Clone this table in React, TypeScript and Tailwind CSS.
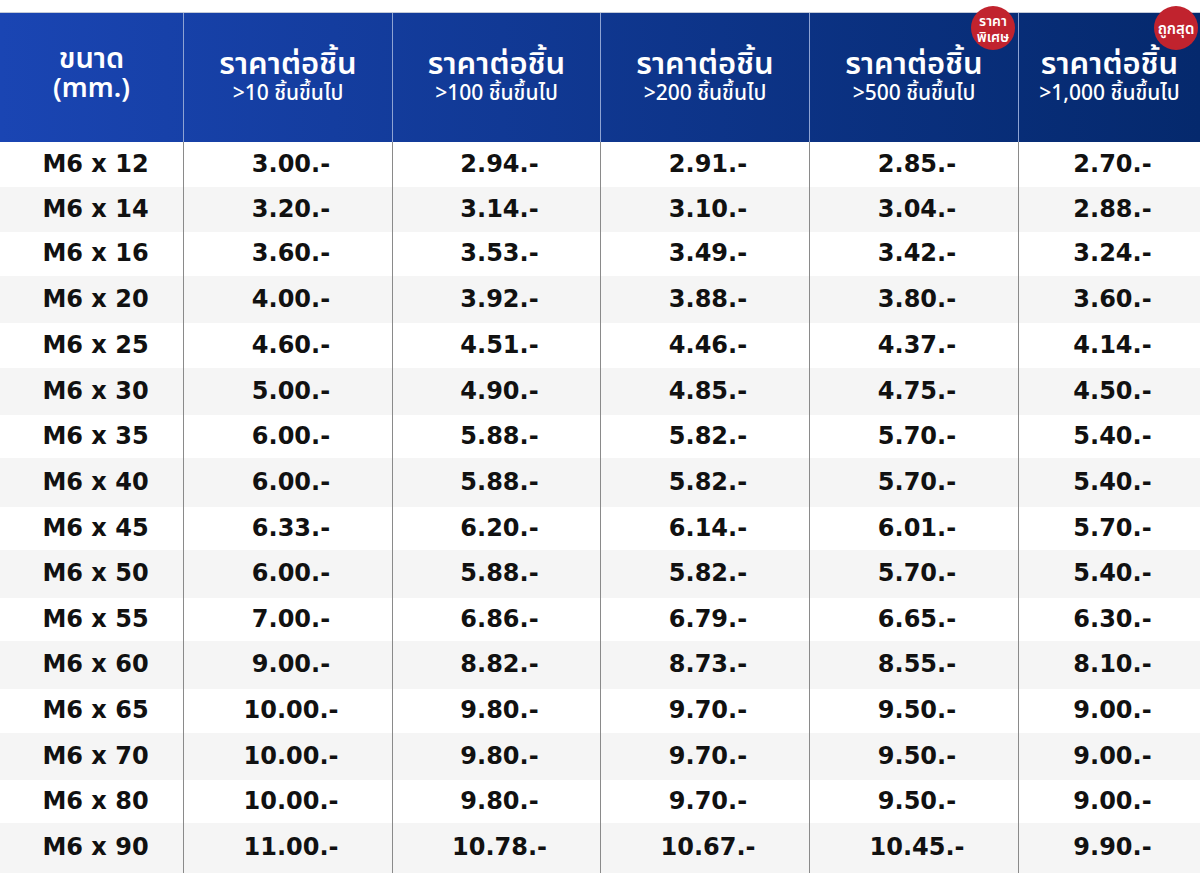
import React from "react";

const rows: [string, string[]][] = [
  ["M6 x 12", ["3.00.-", "2.94.-", "2.91.-", "2.85.-", "2.70.-"]],
  ["M6 x 14", ["3.20.-", "3.14.-", "3.10.-", "3.04.-", "2.88.-"]],
  ["M6 x 16", ["3.60.-", "3.53.-", "3.49.-", "3.42.-", "3.24.-"]],
  ["M6 x 20", ["4.00.-", "3.92.-", "3.88.-", "3.80.-", "3.60.-"]],
  ["M6 x 25", ["4.60.-", "4.51.-", "4.46.-", "4.37.-", "4.14.-"]],
  ["M6 x 30", ["5.00.-", "4.90.-", "4.85.-", "4.75.-", "4.50.-"]],
  ["M6 x 35", ["6.00.-", "5.88.-", "5.82.-", "5.70.-", "5.40.-"]],
  ["M6 x 40", ["6.00.-", "5.88.-", "5.82.-", "5.70.-", "5.40.-"]],
  ["M6 x 45", ["6.33.-", "6.20.-", "6.14.-", "6.01.-", "5.70.-"]],
  ["M6 x 50", ["6.00.-", "5.88.-", "5.82.-", "5.70.-", "5.40.-"]],
  ["M6 x 55", ["7.00.-", "6.86.-", "6.79.-", "6.65.-", "6.30.-"]],
  ["M6 x 60", ["9.00.-", "8.82.-", "8.73.-", "8.55.-", "8.10.-"]],
  ["M6 x 65", ["10.00.-", "9.80.-", "9.70.-", "9.50.-", "9.00.-"]],
  ["M6 x 70", ["10.00.-", "9.80.-", "9.70.-", "9.50.-", "9.00.-"]],
  ["M6 x 80", ["10.00.-", "9.80.-", "9.70.-", "9.50.-", "9.00.-"]],
  ["M6 x 90", ["11.00.-", "10.78.-", "10.67.-", "10.45.-", "9.90.-"]],
];

const heights = [
  "h-[45px]", "h-[45px]", "h-[44px]", "h-[47px]", "h-[45px]", "h-[47px]", "h-[43px]", "h-[49px]",
  "h-[43px]", "h-[48px]", "h-[43px]", "h-[48px]", "h-[44px]", "h-[47px]", "h-[43px]", "h-[50px]",
];

const subs = [">10 ชิ้นขึ้นไป", ">100 ชิ้นขึ้นไป", ">200 ชิ้นขึ้นไป", ">500 ชิ้นขึ้นไป", ">1,000 ชิ้นขึ้นไป"];

const colW = ["w-[183px]", "w-[209px]", "w-[208px]", "w-[209px]", "w-[209px]", "flex-1"];

export default function App() {
  return (
    <div
      className="w-[1200px] h-[873px] overflow-hidden bg-white"
      style={{ fontFamily: '"Noto Sans", "Noto Sans Thai", sans-serif' }}
    >
      <div className="h-[12px] bg-white" />
      <div className="relative h-[130px] border-t border-[#c3cad8] bg-gradient-to-r from-[#1a45b3] to-[#05296d] flex text-white">
        <div className={`${colW[0]} flex flex-col items-center justify-center pb-[14px]`}>
          <div className="text-[29px] font-semibold leading-[32px]">ขนาด</div>
          <div className="text-[27px] font-semibold leading-[28px]">(mm.)</div>
        </div>
        {subs.map((s, i) => (
          <div
            key={i}
            className={`${colW[i + 1]} border-l border-[#8ea3d3] flex flex-col items-center justify-center pb-[8px]`}
          >
            <div className="text-[31px] font-semibold leading-[36px]">ราคาต่อชิ้น</div>
            <div className="text-[21px] font-medium leading-[24px]">{s}</div>
          </div>
        ))}
        <div className="absolute left-[971px] top-[-7px] w-[44px] h-[44px] rounded-full bg-[#c1232e] flex flex-col items-center justify-center text-[14px] font-semibold leading-[16px] pt-[2px]">
          <span>ราคา</span>
          <span>พิเศษ</span>
        </div>
        <div className="absolute left-[1154px] top-[-7px] w-[44px] h-[44px] rounded-full bg-[#c1232e] flex items-center justify-center text-[15px] font-semibold">
          <span>ถูกสุด</span>
        </div>
      </div>
      <div style={{ fontFamily: '"DejaVu Sans", sans-serif' }}>
        {rows.map(([size, prices], r) => (
          <div key={r} className={`${heights[r]} flex ${r % 2 === 1 ? "bg-[#f5f5f5]" : "bg-white"} text-[#111] text-[24px] font-bold`}>
            <div className={`${colW[0]} flex items-center justify-center pl-[8px] pb-[2px]`}>{size}</div>
            {prices.map((p, c) => (
              <div key={c} className={`${colW[c + 1]} border-l border-[#8a8a8a] flex items-center justify-center pl-[6px] pb-[2px]`}>
                {p}
              </div>
            ))}
          </div>
        ))}
      </div>
    </div>
  );
}
